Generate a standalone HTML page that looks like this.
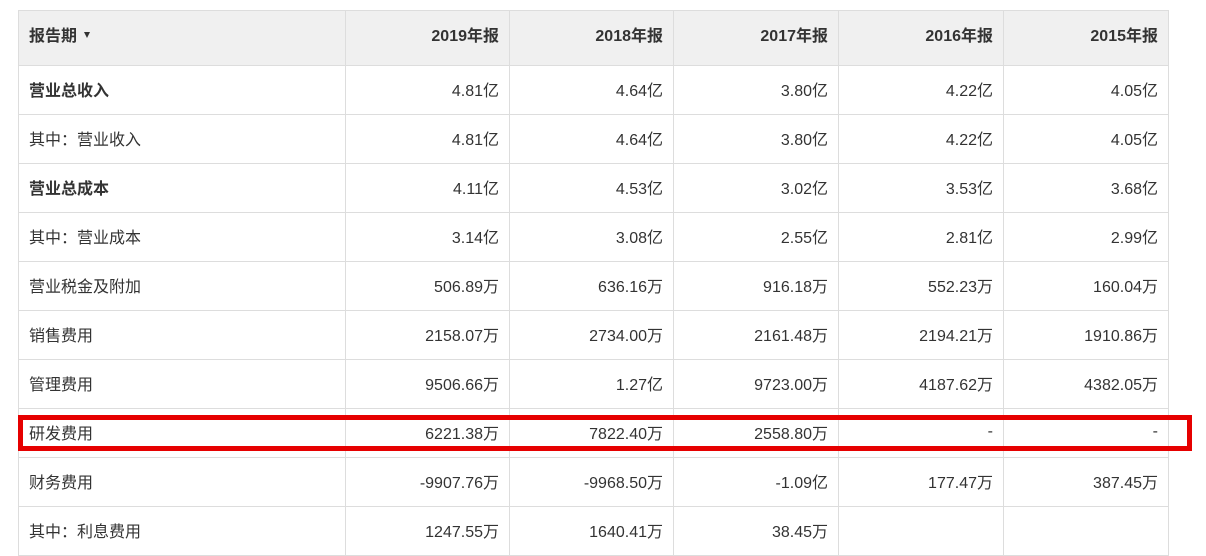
<!DOCTYPE html>
<html><head><meta charset="utf-8"><style>
body{margin:0;width:1206px;height:530px;background:#fff;overflow:hidden;position:relative;font-family:"Liberation Sans","Noto Sans CJK SC",sans-serif;color:#333;font-size:16px}
.r{position:absolute;left:18px;width:1151px;border-bottom:1px solid #ddd;box-sizing:border-box}
.c{position:absolute;top:0;height:100%;box-sizing:border-box;border-right:1px solid #ddd;text-align:right;padding-right:10px;padding-bottom:3px;display:flex;align-items:center;justify-content:flex-end}
.c0{left:0;width:328px;border-left:1px solid #ddd;justify-content:flex-start;padding-left:10px}
.c1{left:328px;width:164px}.c2{left:492px;width:164px}.c3{left:656px;width:165px}.c4{left:821px;width:165px}.c5{left:986px;width:165px}
.h{background:#f0f0f0;font-weight:bold;border-top:1px solid #ddd}
.h .c{padding-bottom:8px}
b{font-weight:bold}
.tri{display:inline-block;width:0;height:0;border-left:3px solid transparent;border-right:3px solid transparent;border-top:6px solid #333;margin-left:7px;margin-top:2px}
.red{position:absolute;left:18px;top:415px;width:1174px;height:36px;border:5px solid #e60000;box-sizing:border-box}
</style></head><body>
<div class="r h" style="top:10px;height:56px"><div class="c c0">报告期<span class="tri"></span></div><div class="c c1">2019年报</div><div class="c c2">2018年报</div><div class="c c3">2017年报</div><div class="c c4">2016年报</div><div class="c c5">2015年报</div></div>
<div class="r" style="top:66px;height:49px"><div class="c c0"><b>营业总收入</b></div><div class="c c1">4.81亿</div><div class="c c2">4.64亿</div><div class="c c3">3.80亿</div><div class="c c4">4.22亿</div><div class="c c5">4.05亿</div></div>
<div class="r" style="top:115px;height:49px"><div class="c c0">其中：营业收入</div><div class="c c1">4.81亿</div><div class="c c2">4.64亿</div><div class="c c3">3.80亿</div><div class="c c4">4.22亿</div><div class="c c5">4.05亿</div></div>
<div class="r" style="top:164px;height:49px"><div class="c c0"><b>营业总成本</b></div><div class="c c1">4.11亿</div><div class="c c2">4.53亿</div><div class="c c3">3.02亿</div><div class="c c4">3.53亿</div><div class="c c5">3.68亿</div></div>
<div class="r" style="top:213px;height:49px"><div class="c c0">其中：营业成本</div><div class="c c1">3.14亿</div><div class="c c2">3.08亿</div><div class="c c3">2.55亿</div><div class="c c4">2.81亿</div><div class="c c5">2.99亿</div></div>
<div class="r" style="top:262px;height:49px"><div class="c c0">营业税金及附加</div><div class="c c1">506.89万</div><div class="c c2">636.16万</div><div class="c c3">916.18万</div><div class="c c4">552.23万</div><div class="c c5">160.04万</div></div>
<div class="r" style="top:311px;height:49px"><div class="c c0">销售费用</div><div class="c c1">2158.07万</div><div class="c c2">2734.00万</div><div class="c c3">2161.48万</div><div class="c c4">2194.21万</div><div class="c c5">1910.86万</div></div>
<div class="r" style="top:360px;height:49px"><div class="c c0">管理费用</div><div class="c c1">9506.66万</div><div class="c c2">1.27亿</div><div class="c c3">9723.00万</div><div class="c c4">4187.62万</div><div class="c c5">4382.05万</div></div>
<div class="r" style="top:409px;height:49px"><div class="c c0">研发费用</div><div class="c c1">6221.38万</div><div class="c c2">7822.40万</div><div class="c c3">2558.80万</div><div class="c c4">-</div><div class="c c5">-</div></div>
<div class="r" style="top:458px;height:49px"><div class="c c0">财务费用</div><div class="c c1">-9907.76万</div><div class="c c2">-9968.50万</div><div class="c c3">-1.09亿</div><div class="c c4">177.47万</div><div class="c c5">387.45万</div></div>
<div class="r" style="top:507px;height:49px"><div class="c c0">其中：利息费用</div><div class="c c1">1247.55万</div><div class="c c2">1640.41万</div><div class="c c3">38.45万</div><div class="c c4"></div><div class="c c5"></div></div>
<div class="red"></div>
</body></html>
